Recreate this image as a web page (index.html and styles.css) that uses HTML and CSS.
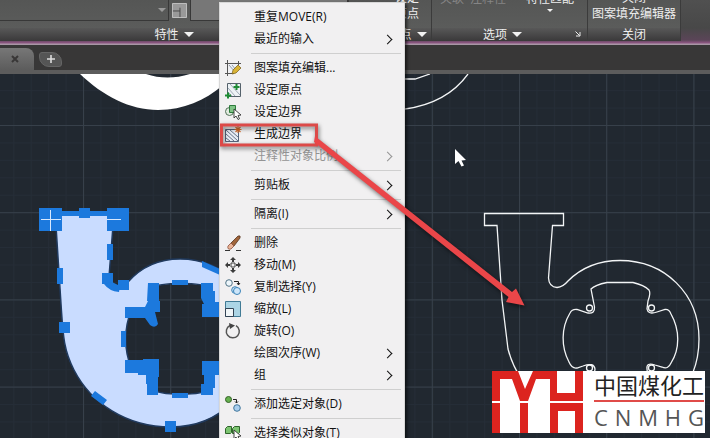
FILE: index.html
```html
<!DOCTYPE html>
<html lang="zh-CN">
<head>
<meta charset="utf-8">
<title>CAD</title>
<link rel="stylesheet" href="styles.css">
</head>
<body>
<div class="app">
  <header class="ribbon">
    <section class="panel panel-props">
      <div class="panel-body props-body">
        <span class="combo"><i class="tri tri-dim"></i></span>
        <svg class="swatch" viewBox="0 0 16 16"><path d="M.5.5h15v15H.5z" fill="#999" stroke="#c4c4c4"/><path d="M1 8.500h7.500V15M8.500 8.500V5" fill="none" stroke="#444"/></svg>
        <span class="combo combo-light"></span>
      </div>
      <div class="panel-label">特性<i class="tri"></i></div>
    </section>
    <section class="panel panel-origin">
      <div class="panel-body"><span>设定</span><span>原点</span></div>
      <div class="panel-label">原点<i class="tri"></i></div>
    </section>
    <section class="panel panel-options">
      <div class="panel-body options-body">
        <span class="dim">关联</span><span class="dim">注释性</span>
        <span class="match">特性匹配<i class="tri tri-small"></i></span>
      </div>
      <div class="panel-label">选项<i class="tri"></i>
        <svg class="launcher" viewBox="0 0 6 6"><path d="M.5.5l4 4M5 1v4H1" fill="none" stroke="#eee"/></svg>
      </div>
    </section>
    <section class="panel panel-close">
      <div class="panel-body"><span>关闭</span><span>图案填充编辑器</span></div>
      <div class="panel-label">关闭</div>
    </section>
  </header>

  <nav class="tabs">
    <div class="tab"><button class="tab-close" aria-label="关闭"><svg viewBox="0 0 8 8"><path d="M1 1l6 6M7 1L1 7" stroke="#393737" stroke-width="2"/></svg></button></div>
    <button class="tab-add" aria-label="新建"><svg viewBox="0 0 8 8"><path d="M4 0v8M0 4h8" stroke="#ddd" stroke-width="1.600"/></svg></button>
  </nav>

  <main class="canvas">
    <svg class="drawing" viewBox="0 74 710 364" preserveAspectRatio="xMinYMin slice">
      <defs>
        <pattern id="minor" x="83" y="125" width="17.440" height="17.440" patternUnits="userSpaceOnUse"><path d="M0 .5h17.440M.5 0v17.440" stroke="#252d37" fill="none"/></pattern>
        <pattern id="major" x="83" y="125" width="87.200" height="87.200" patternUnits="userSpaceOnUse"><path d="M0 .5h87.200M.5 0v87.200" stroke="#37404a" fill="none"/></pattern>
      </defs>
      <path d="M0 74h710v364H0z" fill="#212830"/>
      <path d="M0 74h710v364H0z" fill="url(#minor)"/>
      <path d="M0 74h710v364H0z" fill="url(#major)"/>

      <!-- filled outline, upper left -->
      <path d="M80 74C103 96 130 110 158 110C184 110 205 100 222 86V74H190Q167 81 146 74z" fill="#fff"/>

      <!-- selected hatch -->
      <path fill-rule="evenodd" fill="#c9dcff" stroke="#203a5e" stroke-width="1.500" d="M44 214H124V226H113L109 277C109 289 121 292 128 282C142 266 161 259 180 259C224 259 258 293 258 339C258 390 220 427 171 427C126 427 91 403 74 370C63 349 63 333 61 304L56 226H44z
      M152 288C160 282 202 282 210 288L212 303L208 311L232 310C244 328 244 353 232 366L208 362L210 389C202 396 160 396 152 389L154 367L131 367C124 350 124 328 131 311L154 312z"/>
      <g fill="#1c79dd">
        <path d="M39 208h23v23H39zM79 208h11v10H79zM107 208h22v23h-22zM58 211h52v5H58zM107 244h6v16h-6zM57 268h6v16h-6zM102 273h11v11h-11zM118 280h11v10h-11zM59 322h11v11H59zM165 421h11v11h-11zM172 280h16v5h-16zM172 393h16v5h-16zM121 331h5v16h-5z"/>
        <path d="M104 284l8-2 8 4-1 6q-10-1-15-8zM202 261l18 8v6l-18-8zM91 396l4-5 12 9-4 5z"/>
        <path d="M148 283h11v18h1v11h-5l3 12q-3 5-8 1l-5-7h-20v-11h20l3-6h-1zM201 283h12v8h2v11h5v15h-18v-13h2l-3-6zM125 360h18v-1h16v18h-1v18h-11v-11h-1v-9h-8v-2h-13zM202 361h18v14h-5v13h-2v7h-12v-11h3v-9h-2z"/>
      </g>
      <path d="M41 219.500h20M50.500 210v21M107 219.500h14" stroke="#d8e9ff" fill="none"/>

      <!-- outline drawing -->
      <g fill="none" stroke="#f3f5f6" stroke-width="1.300">
        <path d="M405 79h10l15-5M405 109Q447 103 468 74"/>
        <path d="M497 225.500h-12.500v-12h79v12H552.500L548.500 278Q549 287 557 287.500Q563 287 568 281C582 267 600 260.500 620 260.500C665 260.500 699 294 699 339C699 389 660 427 612 427C565 427 520 395 508 349L502 300L497 225.500z"/>
        <path d="M591 289Q595 285 607 282.500H633Q644 285 649 290Q651 293 648 301L647 309Q648 315 657 312L665 309.500Q669 309 671 314C680 330 680 349 671 363Q668 370 662 367L655 365Q646 362 647 369L649 389Q642 396 620 396Q599 396 592 389L595 369Q594 362 583 366L577 368Q572 369 569 362C561 347 561 328 570 313Q572 309 577 309.500L588 313Q595 314 594.500 307Z"/>
        <circle cx="589.500" cy="308" r="3"/><circle cx="651.500" cy="308" r="3"/><circle cx="589.500" cy="368" r="3"/><circle cx="651.500" cy="368" r="3"/>
      </g>
      <path d="M455 149v15l3.500-3 3 5.500 2.500-1-2.500-5 4.500-.5z" fill="#fff"/>
    </svg>
  </main>

  <div class="menu" role="menu">
    <button class="item"><span class="icon"></span><span class="text">重复MOVE(R)</span></button>
    <button class="item sub"><span class="icon"></span><span class="text">最近的输入</span></button>
    <hr>
    <button class="item"><span class="icon"><svg viewBox="0 0 16 16"><path d="M4.500 4.500h8v8h-8z" fill="#eef3f9"/><path d="M0 3.500h16M2.500 0v16M0 13.500h9M13.500 1v4" stroke="#555" fill="none"/><path d="M4 5l6 7M7 5l4 5" stroke="#7e8794" stroke-width=".8"/><path d="M7 14l1-4 5-5 3 3-5 5z" fill="#d9b436" stroke="#755c18" stroke-width=".7"/></svg></span><span class="text">图案填充编辑...</span></button>
    <button class="item"><span class="icon"><svg viewBox="0 0 16 16"><path d="M2.500 1.500h13v13h-13z" fill="#edf2f5" stroke="#55616b"/><path d="M3 6l7 8M5 2l10 11M3 10l4 4" stroke="#8b98a4" stroke-width=".8"/><path d="M11.500 2v6M8.500 5h6M3 10.500v6M0 13.500h6" stroke="#1e8b34" stroke-width="2"/></svg></span><span class="text">设定原点</span></button>
    <button class="item"><span class="icon"><svg viewBox="0 0 16 16"><circle cx="4.500" cy="7.500" r="4" fill="#e1ebdf" stroke="#537159"/><path d="M4.500 1.500h6v7h-6z" fill="#7fc486" stroke="#2d7a3b"/><path d="M9 5v9l2-2 2 3.500 1.500-.7-1.500-3.300 3-.5z" fill="#fff" stroke="#333" stroke-width=".9"/></svg></span><span class="text">设定边界</span></button>
    <button class="item"><span class="icon"><svg viewBox="0 0 16 16"><path d="M.5 3.500h13v12H.5z" fill="#e8edf5" stroke="#56647a"/><path d="M1 4l12 11M1 8l8 7M5 4l8 7M1 12l4 3" stroke="#56647a" stroke-width=".9"/><path d="M13 0v7M9.500 3.500h7M10.500 1l5 5M15.500 1l-5 5" stroke="#d46a29" stroke-width="1.100"/></svg></span><span class="text">生成边界</span></button>
    <button class="item sub" disabled><span class="icon"></span><span class="text">注释性对象比例</span></button>
    <hr>
    <button class="item sub"><span class="icon"></span><span class="text">剪贴板</span></button>
    <hr>
    <button class="item sub"><span class="icon"></span><span class="text">隔离(I)</span></button>
    <hr>
    <button class="item"><span class="icon"><svg viewBox="0 0 16 16"><path d="M0 15.500h5M11 15.500h5" stroke="#333"/><path d="M6 8l7-7q3-1 2 2l-6 8z" fill="#a0643a" stroke="#573521" stroke-width=".8"/><path d="M6 8l3 3-3 3q-4 1-3-3z" fill="#e9b497" stroke="#8d4e3b" stroke-width=".8"/></svg></span><span class="text">删除</span></button>
    <button class="item"><span class="icon"><svg viewBox="0 0 16 16"><path d="M6 6h4v4H6z" fill="none" stroke="#444"/><path d="M8 0l3 3H9v2H7V3H5zM8 16l-3-3h2v-2h2v2h2zM0 8l3-3v2h2v2H3v2zM16 8l-3 3V9h-2V7h2V5z" fill="#3c3c3c"/></svg></span><span class="text">移动(M)</span></button>
    <button class="item"><span class="icon"><svg viewBox="0 0 16 16"><circle cx="4" cy="4" r="3.300" fill="#edf6fb" stroke="#527487"/><circle cx="10" cy="11" r="3.300" fill="#cde6fa" stroke="#3b83b7"/><circle cx="12" cy="12" r="3.500" fill="#cde6fa" stroke="#3b83b7"/><path d="M9 2.500h4.500V6M12 4l1.500 2L15 4" fill="none" stroke="#222"/></svg></span><span class="text">复制选择(Y)</span></button>
    <button class="item"><span class="icon"><svg viewBox="0 0 16 16"><path d="M.5.5h15v15H.5z" fill="#acd5e5" stroke="#417b95"/><path d="M.5 7.500h8v8h-8z" fill="#f1f6f8" stroke="#345"/></svg></span><span class="text">缩放(L)</span></button>
    <button class="item"><span class="icon"><svg viewBox="0 0 16 16"><path d="M5 2.500A6.500 6.500 0 1 0 11 2.700" fill="none" stroke="#555" stroke-width="1.500"/><path d="M4 0l6 2.500-5 3.500z" fill="#444"/></svg></span><span class="text">旋转(O)</span></button>
    <button class="item sub"><span class="icon"></span><span class="text">绘图次序(W)</span></button>
    <button class="item sub"><span class="icon"></span><span class="text">组</span></button>
    <hr>
    <button class="item"><span class="icon"><svg viewBox="0 0 16 16"><circle cx="3.500" cy="3.500" r="3" fill="#66b14f" stroke="#336127"/><circle cx="12" cy="12" r="3.300" fill="#a9cfef" stroke="#43779c"/><path d="M8 3.500h3.500V7M10 5.500L11.500 7 13 5.500" fill="none" stroke="#222"/></svg></span><span class="text">添加选定对象(D)</span></button>
    <hr>
    <button class="item"><span class="icon"><svg viewBox="0 0 16 16"><path d="M.5 3.500l2-2h4v6l-1 1h-5zM7.500 3.500l2-2h5v6l-1 1h-6z" fill="#7cc471" stroke="#30652c"/><path d="M9 5v9l2-2 2 3.500 1.500-.7-1.500-3.300 3-.5z" fill="#fff" stroke="#333" stroke-width=".9"/></svg></span><span class="text">选择类似对象(T)</span></button>
  </div>

  <svg class="callout" viewBox="0 0 710 438" preserveAspectRatio="xMinYMin slice">
    <path d="M221.500 125h95v20h-95z" fill="none" stroke="#dc4a48" stroke-width="3"/>
    <path d="M315 136L318 138.500 512 292 516 288.500 524.500 305.500 506 302 508.500 297 314 142z" fill="#ea4649"/>
  </svg>

  <aside class="brand">
    <svg class="mark" viewBox="0 0 91 62"><path d="M0 0h26l7 18L41 0h24v22h18V0h8v30H58V8H44L36 30h-8L20 8H8v22H0zM0 32h8v30H0zM28 32h8v30h-8zM58 32h33v30h-8V40H66v22h-8z" fill="#dc241f"/></svg>
    <div class="brand-text">
      <div class="brand-cn">中国煤化工</div>
      <div class="brand-en"><span>C</span><span>N</span><span>M</span><span>H</span><span>G</span></div>
    </div>
  </aside>
</div>
</body>
</html>
```

FILE: styles.css
```css
* { box-sizing: border-box; }
body {
  margin: 0;
  font: 12px/16px "Open Sans", "Noto Sans CJK SC", sans-serif;
  color: #111;
}
button { font: inherit; color: inherit; border: 0; padding: 0; background: none; }
.app {
  position: relative;
  display: flex;
  flex-direction: column;
  height: 100vh;
  overflow: hidden;
  background: #212830;
}

/* ribbon */
.ribbon {
  display: flex;
  height: 45px;
  flex: none;
  color: #eee;
  background: linear-gradient(#505050 0, #484848 28px, #5b4558 40px, #8f5684 43px, #a896a5 44px);
}
.panel {
  display: flex;
  flex-direction: column;
  height: 41px;
  min-width: 0;
  border-right: 1px solid #3b3b3b;
}
.panel-props { flex: 0 0 349px; }
.panel-origin { flex: 0 0 83px; }
.panel-options { flex: 0 0 156px; }
.panel-close { flex: 0 0 93px; }
.panel-body {
  display: flex;
  flex: none;
  flex-direction: column;
  justify-content: flex-end;
  align-items: center;
  height: 28px;
  padding-bottom: 6px;
  overflow: hidden;
  background: linear-gradient(#555655, #5b5c5b);
}
.panel-label {
  position: relative;
  display: flex;
  flex: 1;
  min-height: 0;
  align-items: center;
  justify-content: center;
  gap: 5px;
  line-height: 13px;
  background: linear-gradient(#585858, #3a393a);
}
.tri { border: 5px solid transparent; border-top-color: #f2f2f2; border-bottom: 0; }
.tri-small { border-width: 3px 3px 0; }
.tri-dim { border-width: 4px 4px 0; border-top-color: #999; }
.props-body {
  flex-direction: row;
  justify-content: flex-start;
  align-items: flex-start;
  padding-bottom: 0;
}
.combo {
  display: flex;
  justify-content: flex-end;
  align-items: center;
  width: 169px;
  height: 21px;
  padding-right: 2px;
  border: solid #383838;
  border-width: 0 1px 1px 0;
}
.combo-light { flex: 1; min-width: 0; background: #777; border-left-width: 1px; }
.swatch { width: 15px; height: 15px; margin: 3px 3px 0; }
.panel-origin .panel-body, .panel-origin .panel-label { padding-left: 34px; }
.options-body {
  flex-direction: row;
  align-items: flex-end;
  justify-content: flex-start;
  gap: 6px;
  padding: 0 0 16px 8px;
}
.panel-options .panel-label { padding-right: 14px; }
.dim { color: #858585; padding-bottom: 5px; }
.match { display: flex; flex-direction: column; align-items: center; gap: 2px; margin-left: 14px; }
.launcher { position: absolute; right: 6px; bottom: 4px; width: 6px; height: 6px; }

/* document tabs */
.tabs {
  display: flex;
  flex: none;
  gap: 5px;
  height: 29px;
  padding-top: 3px;
  background: #383737;
  border-bottom: 4px solid #5c5c5c;
}
.tab {
  display: flex;
  align-items: center;
  width: 34px;
  padding-left: 11px;
  background: linear-gradient(#777, #5c5c5c);
  border-radius: 0 8px 0 0;
}
.tab-close svg, .tab-add svg { display: block; width: 8px; height: 8px; }
.tab-add {
  display: flex;
  align-items: center;
  justify-content: center;
  align-self: center;
  width: 23px;
  height: 15px;
  background: #555;
  border: 1px solid #656565;
  border-radius: 3px 10px 3px 10px;
}

.canvas { flex: 1; min-height: 0; }
.drawing { display: block; width: 100%; height: 100%; }

/* context menu */
.menu {
  position: absolute;
  left: 219px;
  top: 2px;
  width: 186px;
  padding: 3px 1px 4px;
  background: #f1f0f1;
  border: 1px solid #d8d8d8;
  box-shadow: 2px 2px 3px #0009;
}
.item {
  display: flex;
  align-items: center;
  width: 100%;
  height: 22px;
  padding-left: 4px;
  text-align: left;
  white-space: nowrap;
}
.item:disabled { color: #949494; }
.icon { width: 16px; height: 16px; margin-right: 13px; }
.icon svg { display: block; overflow: visible; }
.sub::after {
  content: "";
  width: 6px;
  height: 6px;
  margin: 0 12px 0 auto;
  border: solid currentColor;
  border-width: 1px 1px 0 0;
  transform: rotate(45deg);
}
.menu hr {
  height: 1px;
  margin: 3px 2px 3px 30px;
  border: 0;
  background: #cfcfcf;
}

.callout {
  position: absolute;
  inset: 0;
  width: 100%;
  height: 100%;
  pointer-events: none;
  filter: drop-shadow(1px 2px 2px #0008);
}

/* brand plate */
.brand {
  position: absolute;
  right: 5px;
  bottom: 5px;
  display: flex;
  gap: 11px;
  height: 62px;
  padding-right: 1px;
  background: #fff;
}
.mark { width: 91px; height: 62px; }
.brand-text { width: 110px; }
.brand-cn {
  height: 31px;
  font-size: 22px;
  line-height: 29px;
  white-space: nowrap;
  color: #222;
  border-bottom: 2px solid #e04b48;
}
.brand-en {
  display: flex;
  justify-content: space-between;
  font-size: 22px;
  line-height: 30px;
  color: #555;
}
```
